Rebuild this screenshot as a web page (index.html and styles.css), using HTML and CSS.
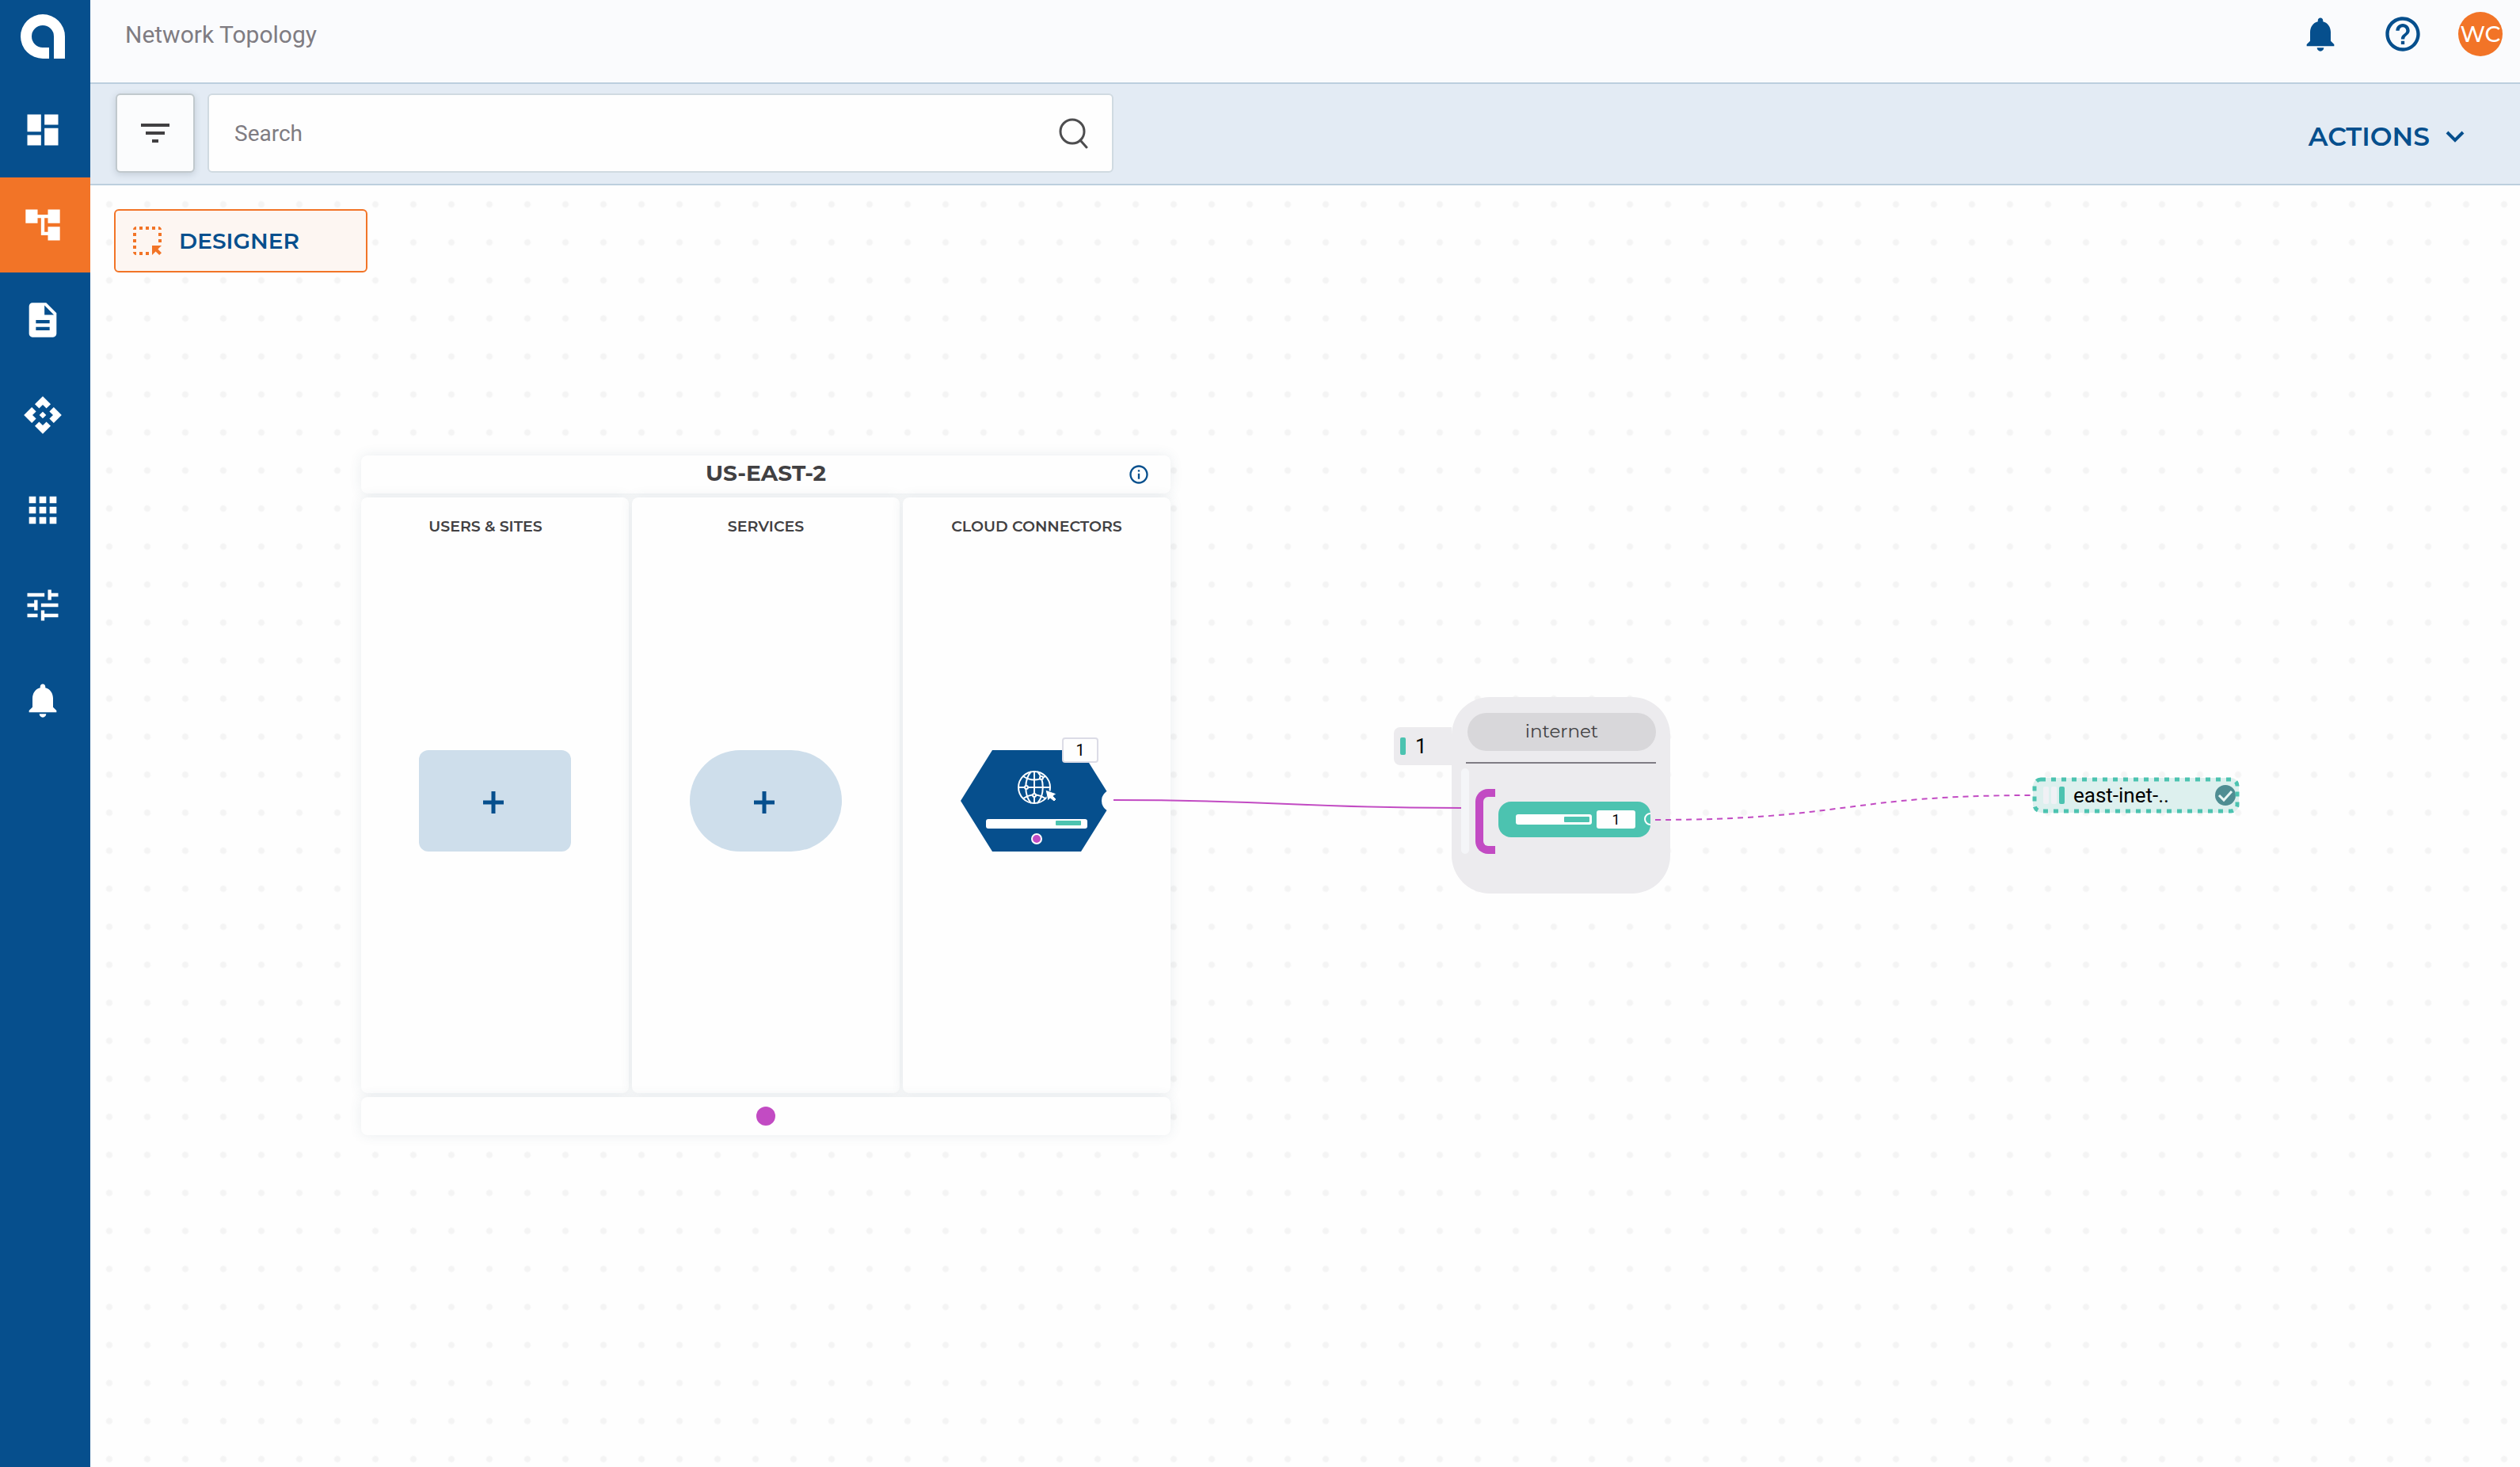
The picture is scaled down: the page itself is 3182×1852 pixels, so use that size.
FILE: index.html
```html
<!DOCTYPE html>
<html lang="en">
<head>
<meta charset="utf-8">
<title>Network Topology</title>
<link rel="stylesheet" href="styles.css">
</head>
<body>
<div class="app">
  <nav class="sidebar" aria-label="Main">
    <a class="sidebar__logo" href="#" aria-label="Home">
      <svg width="56" height="56" viewBox="0 0 56 56"><path d="M36 56H28A28 28 0 1 1 56 28V56H42V28A14 14 0 1 0 28 42H36Z"/></svg>
    </a>
    <a class="sidebar__item" href="#" aria-label="Dashboard">
      <svg class="icon" viewBox="0 0 24 24"><path d="M3 13h8V3H3v10zm0 8h8v-6H3v6zm10 0h8V11h-8v10zm0-18v6h8V3h-8z"/></svg>
    </a>
    <a class="sidebar__item sidebar__item--active" href="#" aria-label="Network topology" aria-current="page">
      <svg class="icon" viewBox="0 0 24 24"><path d="M22 11V3h-7v3H9V3H2v8h7V8h2v10h4v3h7v-8h-7v3h-2V8h2v3z"/></svg>
    </a>
    <a class="sidebar__item" href="#" aria-label="Documents">
      <svg class="icon" viewBox="0 0 24 24"><path d="M14 2H6c-1.100 0-1.990.9-1.990 2L4 20c0 1.100.89 2 1.990 2H18c1.100 0 2-.9 2-2V8l-6-6zm2 16H8v-2h8v2zm0-4H8v-2h8v2zm-3-5V3.500L18.500 9H13z"/></svg>
    </a>
    <a class="sidebar__item" href="#" aria-label="Integrations">
      <svg class="icon" viewBox="0 0 24 24"><path d="M14 12l-2 2-2-2 2-2 2 2zm-2-6l2.120 2.120 2.500-2.500L12 1 7.380 5.620l2.500 2.500L12 6zm-6 6l2.120-2.120-2.500-2.500L1 12l4.620 4.620 2.500-2.500L6 12zm12 0l-2.120 2.120 2.500 2.500L23 12l-4.620-4.620-2.500 2.500L18 12zm-6 6l-2.120-2.120-2.500 2.500L12 23l4.620-4.620-2.500-2.500L12 18z"/></svg>
    </a>
    <a class="sidebar__item" href="#" aria-label="Apps">
      <svg class="icon" viewBox="0 0 24 24"><path d="M4 8h4V4H4v4zm6 12h4v-4h-4v4zm-6 0h4v-4H4v4zm0-6h4v-4H4v4zm6 0h4v-4h-4v4zm6-10v4h4V4h-4zm-6 4h4V4h-4v4zm6 6h4v-4h-4v4zm0 6h4v-4h-4v4z"/></svg>
    </a>
    <a class="sidebar__item" href="#" aria-label="Settings">
      <svg class="icon" viewBox="0 0 24 24"><path d="M3 17v2h6v-2H3zM3 5v2h10V5H3zm10 16v-2h8v-2h-8v-2h-2v6h2zM7 9v2H3v2h4v2h2V9H7zm14 4v-2H11v2h10zm-6-4h2V7h4V5h-4V3h-2v6z"/></svg>
    </a>
    <a class="sidebar__item" href="#" aria-label="Alerts">
      <svg class="icon" viewBox="0 0 24 24"><path d="M12 22c1.100 0 2-.9 2-2h-4c0 1.100.89 2 2 2zm6-6v-5c0-3.070-1.640-5.640-4.500-6.320V4c0-.83-.67-1.500-1.500-1.500s-1.500.67-1.500 1.500v.68C7.630 5.360 6 7.920 6 11v5l-2 2v1h16v-1l-2-2z"/></svg>
    </a>
  </nav>

  <div class="main">
    <header class="header">
      <h1 class="header__title">Network Topology</h1>
      <div class="header__actions">
        <button class="icon-button" type="button" aria-label="Notifications">
          <svg class="icon" viewBox="0 0 24 24"><path d="M12 22c1.100 0 2-.9 2-2h-4c0 1.100.89 2 2 2zm6-6v-5c0-3.070-1.640-5.640-4.500-6.320V4c0-.83-.67-1.500-1.500-1.500s-1.500.67-1.500 1.500v.68C7.630 5.360 6 7.920 6 11v5l-2 2v1h16v-1l-2-2z"/></svg>
        </button>
        <button class="icon-button" type="button" aria-label="Help">
          <svg class="icon" viewBox="0 0 24 24"><path d="M11 18h2v-2h-2v2zm1-16C6.480 2 2 6.480 2 12s4.480 10 10 10 10-4.480 10-10S17.520 2 12 2zm0 18c-4.410 0-8-3.590-8-8s3.590-8 8-8 8 3.590 8 8-3.590 8-8 8zm0-14c-2.210 0-4 1.790-4 4h2c0-1.100.9-2 2-2s2 .9 2 2c0 2-3 1.750-3 5h2c0-2.250 3-2.500 3-5 0-2.210-1.790-4-4-4z"/></svg>
        </button>
        <button class="avatar" type="button">WC</button>
      </div>
    </header>

    <div class="toolbar">
      <button class="filter" type="button" aria-label="Filter">
        <svg width="48" height="48" viewBox="0 0 24 24"><path d="M10 18h4v-2h-4v2zM3 6v2h18V6H3zm3 7h12v-2H6v2z"/></svg>
      </button>
      <form class="search" role="search">
        <input class="search__input" type="search" placeholder="Search" aria-label="Search">
        <button class="search__submit" type="submit" aria-label="Run search">
          <svg width="40" height="40" viewBox="0 0 40 40"><circle cx="18" cy="18" r="15"/><path d="M28 29l8 9"/></svg>
        </button>
      </form>
      <button class="actions" type="button">ACTIONS
        <svg width="24" height="16" viewBox="0 0 24 16"><path d="M2 3l10 10L22 3"/></svg>
      </button>
    </div>

    <main class="canvas">
      <button class="designer" type="button">
        <svg width="48" height="48" viewBox="0 0 24 24"><path d="M17 5h-2V3h2zM15 15v6l2.290-2.290L19.590 21 21 19.590l-2.290-2.290L21 15zM19 9h2V7h-2zM19 13h2v-2h-2zM11 21h2v-2h-2zM7 5h2V3H7zM3 17h2v-2H3zM5 21v-2H3c0 1.100.9 2 2 2zM19 3v2h2c0-1.100-.9-2-2-2zM11 5h2V3h-2zM3 9h2V7H3zM7 21h2v-2H7zM3 13h2v-2H3zM3 5h2V3c-1.100 0-2 .9-2 2z"/></svg>
        DESIGNER
      </button>

      <section class="region">
        <header class="region__header">
          <h2 class="region__name">US-EAST-2</h2>
          <button class="region__info" type="button" aria-label="Region details">
            <svg width="28" height="28" viewBox="0 0 24 24"><path d="M11 7h2v2h-2zm0 4h2v6h-2zm1-9C6.480 2 2 6.480 2 12s4.480 10 10 10 10-4.480 10-10S17.520 2 12 2zm0 18c-4.410 0-8-3.590-8-8s3.590-8 8-8 8 3.590 8 8-3.590 8-8 8z"/></svg>
          </button>
        </header>
        <div class="region__columns">
          <div class="column column--sites">
            <h3 class="column__title">USERS &amp; SITES</h3>
            <div class="column__body">
              <button class="add" type="button" aria-label="Add user or site">
                <svg width="26" height="28" viewBox="0 0 26 28"><path d="M13 0v28M0 14h26"/></svg>
              </button>
            </div>
          </div>
          <div class="column">
            <h3 class="column__title">SERVICES</h3>
            <div class="column__body">
              <button class="add add--round" type="button" aria-label="Add service">
                <svg width="26" height="28" viewBox="0 0 26 28"><path d="M13 0v28M0 14h26"/></svg>
              </button>
            </div>
          </div>
          <div class="column">
            <h3 class="column__title">CLOUD CONNECTORS</h3>
            <div class="column__body">
              <div class="connector">
                <svg class="connector__shape" width="192" height="128" viewBox="0 0 192 128">
                  <path fill="#064f8d" d="M0 64L40 0H152L192 64 152 128H40Z"/>
                  <circle cx="192" cy="64" r="14" fill="#fefefe"/>
                  <g fill="none" stroke="#fff" stroke-width="2">
                    <circle cx="93" cy="47" r="20"/>
                    <path d="M93 27v40M73 47h40M79 33q14 9 28 0M79 61q14-9 28 0M89 27c-9 10-9 30 0 40M97 27c9 10 9 30 0 40"/>
                    <g fill="#064f8d"><circle cx="83" cy="47" r="2"/><circle cx="93" cy="57" r="2"/><circle cx="102" cy="35" r="2"/></g>
                  </g>
                  <path fill="#fff" stroke="#064f8d" d="M107 50l14 5-4 3 4 4-3 3-5-4-3 3z"/>
                  <rect x="32" y="87" width="128" height="12" rx="3" fill="#fff"/>
                  <rect x="120" y="89" width="32" height="6" rx="1" fill="#4cc3b0"/>
                  <circle cx="96" cy="112" r="6" fill="#c24bc3" stroke="#fff" stroke-width="2"/>
                </svg>
                <span class="connector__count">1</span>
              </div>
            </div>
          </div>
        </div>
        <footer class="region__footer"><span class="region__dot"></span></footer>
      </section>

      <div class="segment">
        <div class="segment__tag"><i class="bar bar--teal"></i>1</div>
        <div class="segment__card">
          <div class="segment__name">internet</div>
          <div class="segment__body">
            <i class="segment__rail"></i>
            <i class="segment__bracket"></i>
            <div class="group">
              <span class="meter"><i class="meter__fill"></i></span>
              <span class="group__count">1</span>
              <svg class="group__port" width="8" height="16" viewBox="0 0 8 16"><circle cx="8" cy="8" r="7" fill="none" stroke="#fff" stroke-width="2"/></svg>
            </div>
          </div>
        </div>
      </div>

      <div class="endpoint">
        <svg class="endpoint__outline" width="260" height="44" viewBox="0 0 260 44"><rect x="2" y="2" width="256" height="40" rx="8"/></svg>
        <i class="bar"></i><i class="bar"></i><i class="bar bar--teal"></i>
        <span class="endpoint__name">east-inet-..</span>
        <svg width="26" height="26" viewBox="0 0 26 26"><circle cx="13" cy="13" r="13" fill="#4f8d92"/><path d="M5 13l6 6L21 8" fill="none" stroke="#e9f6f4" stroke-width="3"/></svg>
      </div>

      <svg class="links" width="1200" height="60" viewBox="0 0 1200 60">
        <path d="M0 26C220 26 220 36 439 36"/>
        <path stroke-dasharray="7 6" d="M684 51C924 51 924 20 1162 20"/>
      </svg>
    </main>
  </div>
</div>
</body>
</html>
```

FILE: styles.css
```css
:root {
  --blue: #064f8d;
  --orange: #f27427;
  --teal: #4cc3b0;
  --purple: #c24bc3;
  --ink: #414042;
  --display: Montserrat, Inter, sans-serif;
  --text: Roboto, sans-serif;
}

* {
  box-sizing: border-box;
}

body {
  margin: 0;
  font-family: var(--text);
  color: var(--ink);
  background: #fefefe;
}

button {
  padding: 0;
  border: 0;
  background: none;
  color: inherit;
  font: inherit;
  cursor: pointer;
}

h1, h2, h3 {
  margin: 0;
}

svg {
  display: block;
  flex: none;
  fill: currentColor;
}

.icon {
  width: 52px;
  height: 52px;
}

.app {
  display: grid;
  grid-template-columns: 114px 1fr;
  min-height: 100vh;
}

/* Sidebar */

.sidebar {
  display: flex;
  flex-direction: column;
  background: var(--blue);
}

.sidebar__logo {
  height: 104px;
  padding: 18px 26px;
  color: #fff;
}

.sidebar__item {
  display: flex;
  align-items: center;
  height: 120px;
  padding-left: 28px;
  color: #fff;
}

.sidebar__item--active {
  background: var(--orange);
}

/* Header */

.main {
  display: flex;
  flex-direction: column;
  min-width: 0;
}

.header {
  display: flex;
  align-items: center;
  justify-content: space-between;
  height: 106px;
  padding: 0 22px 18px 44px;
  border-bottom: 2px solid #bccfde;
  background: #fafbfd;
}

.header__title {
  color: #7f7c82;
  font-size: 30px;
  font-weight: 400;
}

.header__actions {
  display: flex;
  align-items: center;
  gap: 48px;
  color: var(--blue);
}

.icon-button {
  padding-right: 4px;
}

.avatar {
  width: 56px;
  height: 56px;
  margin-left: -8px;
  border-radius: 50%;
  background: var(--orange);
  color: #fff;
  font-family: var(--display);
  font-size: 28px;
  font-weight: 500;
}

/* Toolbar */

.toolbar {
  display: flex;
  align-items: center;
  height: 128px;
  padding: 0 70px 2px 32px;
  border-bottom: 2px solid #bccfde;
  background: #e3ebf4;
}

.filter {
  display: grid;
  place-items: center;
  flex: none;
  width: 100px;
  height: 100px;
  margin-right: 16px;
  border: 2px solid #c1c9cd;
  border-radius: 6px;
  background: #fbfcfd;
  box-shadow: 0 2px 8px rgba(60, 80, 100, .2);
}

.search {
  display: flex;
  align-items: center;
  flex: 0 1 1144px;
  height: 100px;
  padding: 0 28px 0 32px;
  border: 2px solid #d0dae1;
  border-radius: 6px;
  background: #fefefe;
}

.search__input {
  flex: 1;
  min-width: 0;
  padding: 0;
  border: 0;
  outline: 0;
  background: none;
  color: var(--ink);
  font: 28px var(--text);
}

.search__input::placeholder {
  color: #7f7c82;
}

.search__submit svg {
  fill: none;
  stroke: #4d4d4f;
  stroke-width: 3;
  stroke-linecap: round;
}

.actions {
  display: flex;
  align-items: center;
  gap: 20px;
  margin-left: auto;
  padding-top: 8px;
  color: var(--blue);
  font-family: var(--display);
  font-size: 33px;
  font-weight: 600;
}

.actions svg {
  fill: none;
  stroke: currentColor;
  stroke-width: 4;
}

/* Canvas */

.canvas {
  position: relative;
  flex: 1;
  min-height: 1240px;
  padding: 30px;
  background: radial-gradient(circle, #f4f4f4 3px, transparent 5px) 0 0 / 48px 48px #fefefe;
}

.designer {
  display: flex;
  align-items: center;
  gap: 16px;
  width: 320px;
  height: 80px;
  padding-left: 16px;
  border: 2px solid var(--orange);
  border-radius: 6px;
  background: #fdf6f2;
  color: var(--blue);
  font-family: var(--display);
  font-size: 28px;
  font-weight: 600;
}

.designer svg {
  color: var(--orange);
}

.links {
  position: absolute;
  left: 1292px;
  top: 750px;
  fill: none;
  stroke: var(--purple);
  stroke-width: 2;
  pointer-events: none;
}

/* Region panel */

.region {
  position: absolute;
  left: 342px;
  top: 341px;
  display: grid;
  grid-template-rows: 48px 752px 48px;
  gap: 5px;
  width: 1022px;
  font-family: var(--display);
}

.region__header,
.region__footer,
.column {
  border-radius: 8px;
  background: #fefefe;
  box-shadow: 0 0 16px rgba(60, 90, 110, .1);
}

.region__header {
  display: grid;
  grid-template-columns: 1fr auto 1fr;
  align-items: center;
  padding: 0 26px;
}

.region__name {
  grid-column: 2;
  padding-bottom: 4px;
  font-size: 28px;
  font-weight: 700;
}

.region__info {
  justify-self: end;
  color: var(--blue);
}

.region__columns {
  display: grid;
  grid-template-columns: repeat(3, 1fr);
  gap: 4px;
}

.column {
  display: flex;
  flex-direction: column;
  padding: 24px 0 36px;
}

.column__title {
  font-size: 19px;
  font-weight: 600;
  line-height: 26px;
  text-align: center;
}

.column--sites .column__title {
  padding-right: 24px;
}

.column__body {
  display: grid;
  place-items: center;
  flex: 1;
}

.add {
  display: grid;
  place-items: center;
  width: 192px;
  height: 128px;
  padding: 4px 4px 0 0;
  border-radius: 12px;
  background: #cedeeb;
}

.add--round {
  border-radius: 64px;
}

.add svg {
  stroke: var(--blue);
  stroke-width: 5;
}

.connector {
  position: relative;
}

.connector__count {
  position: absolute;
  left: 128px;
  top: -16px;
  width: 46px;
  height: 32px;
  border: 2px solid #dcdce6;
  border-radius: 4px;
  background: #fefefe;
  color: #000;
  font: 20px/28px var(--text);
  text-align: center;
}

.region__footer {
  display: grid;
  place-items: center;
}

.region__dot {
  width: 24px;
  height: 24px;
  border-radius: 50%;
  background: var(--purple);
}

/* Segment node */

.bar {
  width: 7px;
  height: 22px;
  border-radius: 2px;
  background: #f0f1f5;
}

.bar--teal {
  background: var(--teal);
}

.segment {
  position: absolute;
  left: 1646px;
  top: 646px;
  display: flex;
  align-items: flex-start;
}

.segment__tag {
  display: flex;
  align-items: center;
  gap: 12px;
  width: 73px;
  height: 48px;
  margin-top: 38px;
  padding-left: 8px;
  border-radius: 8px 0 0 8px;
  background: #ecebee;
  color: #000;
  font-size: 26px;
}

.segment__card {
  width: 276px;
  height: 248px;
  padding: 20px 18px 0 12px;
  border-radius: 48px;
  background: #ecebee;
}

.segment__name {
  height: 48px;
  margin-left: 8px;
  border-radius: 24px;
  background: #d8d7da;
  font: 23px/46px var(--display);
  text-align: center;
}

.segment__body {
  display: flex;
  align-items: center;
  margin-top: 14px;
  padding-top: 8px;
  position: relative;
}

.segment__body::before {
  content: "";
  position: absolute;
  left: 6px;
  right: 0;
  top: 0;
  height: 2px;
  background: #7f7c84;
}

.segment__rail {
  width: 10px;
  height: 108px;
  margin-right: 8px;
  border-radius: 5px;
  background: #f4f5f8;
}

.segment__bracket {
  align-self: flex-end;
  width: 25px;
  height: 82px;
  margin-right: 4px;
  border: 10px solid var(--purple);
  border-right: 0;
  border-radius: 16px 0 0 16px;
}

.group {
  position: relative;
  display: flex;
  align-items: center;
  gap: 6px;
  flex: none;
  width: 192px;
  height: 45px;
  margin-top: 20px;
  padding-left: 22px;
  border-radius: 16px;
  background: var(--teal);
}

.meter {
  width: 96px;
  height: 13px;
  padding: 3px;
  border-radius: 3px;
  background: #fefefe;
}

.meter__fill {
  display: block;
  width: 32px;
  height: 7px;
  margin-left: auto;
  border-radius: 1px;
  background: var(--teal);
}

.group__count {
  width: 49px;
  height: 23px;
  border-radius: 3px;
  background: #fefefe;
  color: #000;
  font-size: 18px;
  line-height: 24px;
  text-align: center;
}

.group__port {
  position: absolute;
  right: 0;
}

/* Endpoint node */

.endpoint {
  position: absolute;
  left: 2453px;
  top: 748px;
  display: flex;
  align-items: center;
  gap: 3px;
  width: 260px;
  height: 44px;
  padding: 0 4px 0 13px;
  border-radius: 10px;
  background: #ddf0ee;
  color: #000;
  font-size: 26px;
}

.endpoint__outline {
  position: absolute;
  left: 0;
  top: 0;
  fill: none;
  stroke: var(--teal);
  stroke-width: 5;
  stroke-dasharray: 6 7;
  overflow: visible;
}

.endpoint__name {
  flex: 1;
  padding-left: 8px;
}
```
